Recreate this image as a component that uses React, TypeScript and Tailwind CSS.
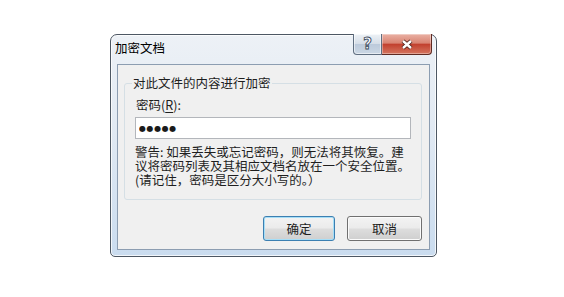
import React from 'react';

const winBtn =
  'h-[25px] rounded-[3px] border text-[12.5px] leading-[14px] text-[#1e1e1e] bg-[linear-gradient(to_bottom,#f3f3f3_0%,#ebebeb_48%,#dddddd_52%,#cfcfcf_100%)]';

export default function App() {
  return (
    <div className="w-[564px] h-[297px] bg-white pl-[110px] pt-[34px] font-['Noto_Sans_CJK_SC','Liberation_Sans',sans-serif] text-[#1e1e1e]">
      {/* Window frame */}
      <div className="w-[327px] h-[223px] flex flex-col rounded-t-[7px] rounded-b-[5px] border border-[#4d5763] bg-[linear-gradient(to_bottom,#edf1f6_0%,#e2eaf3_40%,#cadcef_100%)] shadow-[inset_0_0_0_1px_rgba(255,255,255,0.75)]">
        {/* Title bar */}
        <div className="h-[29px] flex items-start justify-between pl-[4px] pr-[4px]">
          <span className="mt-[6px] text-[12.5px] leading-[14px] text-black">加密文档</span>
          <div className="flex -mt-px">
            <div className="w-[29px] h-[21px] flex items-center justify-center rounded-bl-[4px] border border-t-0 border-[#5f6e80] bg-[linear-gradient(to_bottom,#eef2f6_0%,#d6dee8_48%,#bccadb_52%,#cbd7e4_100%)] shadow-[inset_0_0_0_1px_rgba(255,255,255,0.55)]">
              <span className="font-['DejaVu_Sans',sans-serif] font-bold text-[15px] leading-none text-white [-webkit-text-stroke:0.9px_#3d4c5e]">?</span>
            </div>
            <div className="w-[50px] h-[21px] flex items-center justify-center rounded-br-[4px] border border-t-0 border-l-0 border-[#5e2a22] bg-[linear-gradient(to_bottom,#eab1a4_0%,#d98473_45%,#c2412f_52%,#d57660_100%)] shadow-[inset_0_0_0_1px_rgba(255,255,255,0.35)]">
              <svg width="14" height="11" viewBox="0 0 14 11">
                <path d="M3 2 L11 9 M11 2 L3 9" stroke="#4a1c15" strokeWidth="4.2" />
                <path d="M3 2 L11 9 M11 2 L3 9" stroke="#ffffff" strokeWidth="2.4" />
              </svg>
            </div>
          </div>
        </div>

        {/* Client area */}
        <div className="mx-[6px] h-[186px] border border-[#8c9db1] bg-[#f0f0f0] pl-[6px] pr-[7px] pt-[18px]">
          <div className="relative h-[117px] rounded-[3px] border border-[#d5dfe5] px-[10px] pt-[14px]">
            <span className="absolute left-[7px] -top-[8px] bg-[#f0f0f0] px-[1px] text-[12.5px] leading-[14px]">
              对此文件的内容进行加密
            </span>
            <div className="pl-px text-[12.5px] leading-[14px]">
              密码(<span className="underline underline-offset-2">R</span>):
            </div>
            <input
              type="text"
              readOnly
              value="●●●●●"
              className="mt-[5px] block w-full h-[22px] border border-[#b3b6bb] bg-white pl-[3px] outline-none font-['DejaVu_Sans',sans-serif] text-[8px] tracking-[0.6px] text-[#1a1a1a]"
            />
            <div className="mt-[6px] whitespace-nowrap text-[12.5px] leading-[14px]">
              警告: 如果丢失或忘记密码，则无法将其恢复。建
              <br />
              议将密码列表及其相应文档名放在一个安全位置。
              <br />
              (请记住，密码是区分大小写的。）
            </div>
          </div>

          <div className="mt-[16px] flex justify-end gap-[12px]">
            <button className={`${winBtn} w-[72px] border-[#3c7fb1] shadow-[inset_0_0_0_1px_#a6def7]`}>确定</button>
            <button className={`${winBtn} w-[75px] border-[#707070] shadow-[inset_0_0_0_1px_#fbfbfb]`}>取消</button>
          </div>
        </div>
      </div>
    </div>
  );
}
